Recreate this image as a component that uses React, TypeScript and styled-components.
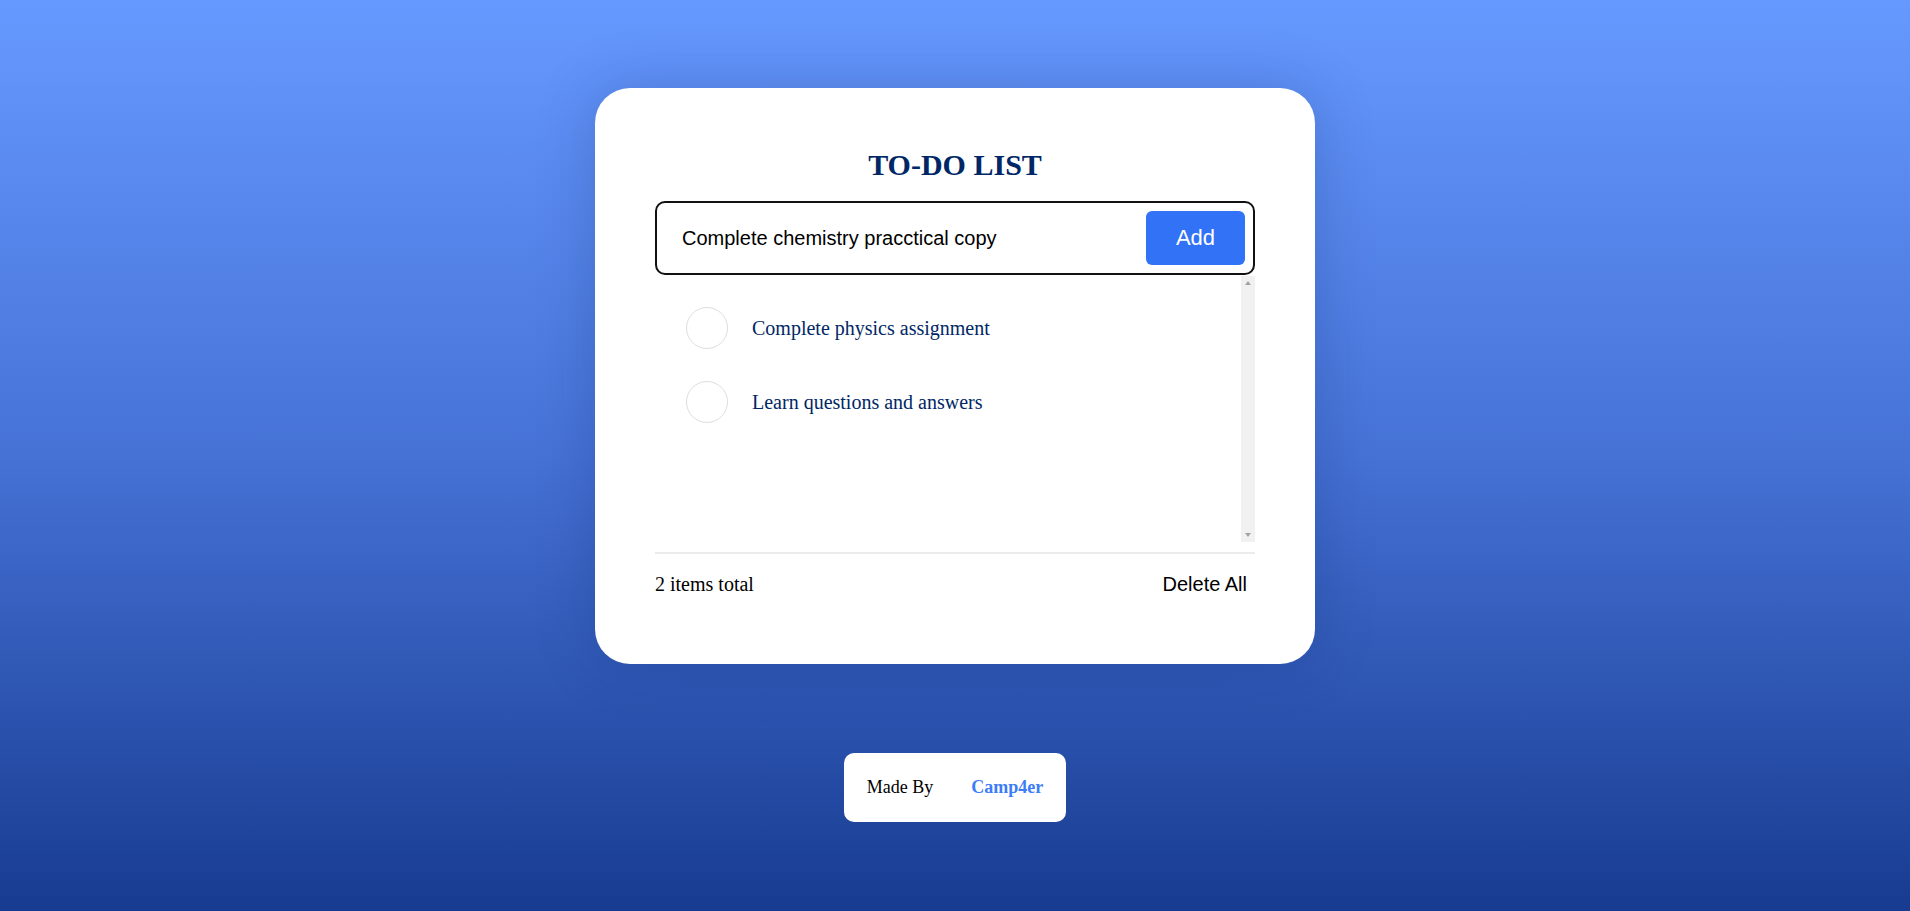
import { useState } from 'react'
import styled, { createGlobalStyle } from 'styled-components'

const GlobalStyle = createGlobalStyle`
    html,
    body {
        margin: 0;
        padding: 0;
    }
    body {
        min-height: 911px;
        background: linear-gradient(180deg, #6699ff 0%, #4672d6 50%, #173b90 100%);
        font-family: 'Liberation Serif', 'Times New Roman', serif;
    }
`

const Page = styled.div`
    display: flex;
    flex-direction: column;
    align-items: center;
    padding-top: 88px;
    min-height: 911px;
    box-sizing: border-box;
`
const Card = styled.div`
    width: 720px;
    box-sizing: border-box;
    padding: 60px 60px 64px;
    background: #fff;
    border-radius: 35px;
    box-shadow: 0 0 60px rgba(10, 30, 90, 0.22);
`
const Title = styled.h1`
    margin: 0 0 19px;
    text-align: center;
    font-size: 30px;
    font-weight: 700;
    color: #002765;
`
const InputRow = styled.form`
    display: flex;
    align-items: center;
    height: 74px;
    box-sizing: border-box;
    padding: 8px;
    border: 2px solid #111;
    border-radius: 10px;
`
const TextInput = styled.input`
    flex: 1;
    min-width: 0;
    border: none;
    outline: none;
    padding: 0 0 0 17px;
    background: transparent;
    font-family: 'Liberation Sans', Arial, sans-serif;
    font-size: 20px;
    color: #000;
`
const AddButton = styled.button`
    width: 99px;
    height: 54px;
    border: none;
    border-radius: 6px;
    background: #3172f6;
    color: #fff;
    font-family: 'Liberation Sans', Arial, sans-serif;
    font-size: 22px;
    cursor: pointer;
`
const ListFrame = styled.div`
    display: flex;
    height: 266px;
    margin: 1px 0 10px;
`
const List = styled.ul`
    flex: 1;
    list-style: none;
    margin: 0;
    padding: 15px;
    overflow-y: auto;
    scrollbar-width: none;
`
const Rail = styled.div`
    flex: none;
    width: 14px;
    display: flex;
    flex-direction: column;
    justify-content: space-between;
    align-items: center;
    padding: 5px 0;
    box-sizing: border-box;
    background: #f1f1f1;
`
const Arrow = styled.span<{ $down?: boolean }>`
    width: 0;
    height: 0;
    border-left: 3.5px solid transparent;
    border-right: 3.5px solid transparent;
    ${(p) => (p.$down ? 'border-top: 4px solid #a3a3a3;' : 'border-bottom: 4px solid #a3a3a3;')}
`
const Item = styled.li`
    display: flex;
    align-items: center;
    gap: 24px;
    padding: 16px;
`
const Check = styled.span<{ $done: boolean }>`
    flex: none;
    width: 42px;
    height: 42px;
    box-sizing: border-box;
    border-radius: 50%;
    border: 1px solid #dedede;
    background: ${(p) => (p.$done ? '#3172f6' : '#fff')};
    cursor: pointer;
`
const ItemText = styled.span<{ $done: boolean }>`
    font-size: 20px;
    color: #002765;
    text-decoration: ${(p) => (p.$done ? 'line-through' : 'none')};
`
const Divider = styled.hr`
    margin: 0;
    border: none;
    height: 2px;
    background: #ebebeb;
`
const Footer = styled.div`
    display: flex;
    align-items: center;
    justify-content: space-between;
    padding-top: 15px;
    font-size: 20px;
    color: #000;
`
const DeleteButton = styled.button`
    border: none;
    background: none;
    padding: 4px 8px;
    font-family: 'Liberation Sans', Arial, sans-serif;
    font-size: 20px;
    color: #000;
    cursor: pointer;
`
const Credit = styled.div`
    display: flex;
    align-items: center;
    gap: 38px;
    height: 69px;
    box-sizing: border-box;
    padding: 0 23px;
    margin-top: 89px;
    background: #fff;
    border-radius: 10px;
    font-size: 18px;
    color: #000;
`
const Author = styled.span`
    font-weight: 700;
    color: #3c7df6;
`

type Todo = { text: string; done: boolean }

export default function App() {
    const [todos, setTodos] = useState<Todo[]>([
        { text: 'Complete physics assignment', done: false },
        { text: 'Learn questions and answers', done: false },
    ])
    const [draft, setDraft] = useState('Complete chemistry pracctical copy')

    const add = (e: React.FormEvent) => {
        e.preventDefault()
        if (!draft.trim()) return
        setTodos([...todos, { text: draft.trim(), done: false }])
        setDraft('')
    }

    const toggle = (i: number) =>
        setTodos(todos.map((t, j) => (j === i ? { ...t, done: !t.done } : t)))

    return (
        <Page>
            <GlobalStyle />
            <Card>
                <Title>TO-DO LIST</Title>
                <InputRow onSubmit={add}>
                    <TextInput value={draft} onChange={(e) => setDraft(e.target.value)} />
                    <AddButton type="submit">Add</AddButton>
                </InputRow>
                <ListFrame>
                    <List>
                        {todos.map((t, i) => (
                            <Item key={i}>
                                <Check $done={t.done} onClick={() => toggle(i)} />
                                <ItemText $done={t.done}>{t.text}</ItemText>
                            </Item>
                        ))}
                    </List>
                    <Rail>
                        <Arrow />
                        <Arrow $down />
                    </Rail>
                </ListFrame>
                <Divider />
                <Footer>
                    <span>{todos.length} items total</span>
                    <DeleteButton onClick={() => setTodos([])}>Delete All</DeleteButton>
                </Footer>
            </Card>
            <Credit>
                <span>Made By</span>
                <Author>Camp4er</Author>
            </Credit>
        </Page>
    )
}
